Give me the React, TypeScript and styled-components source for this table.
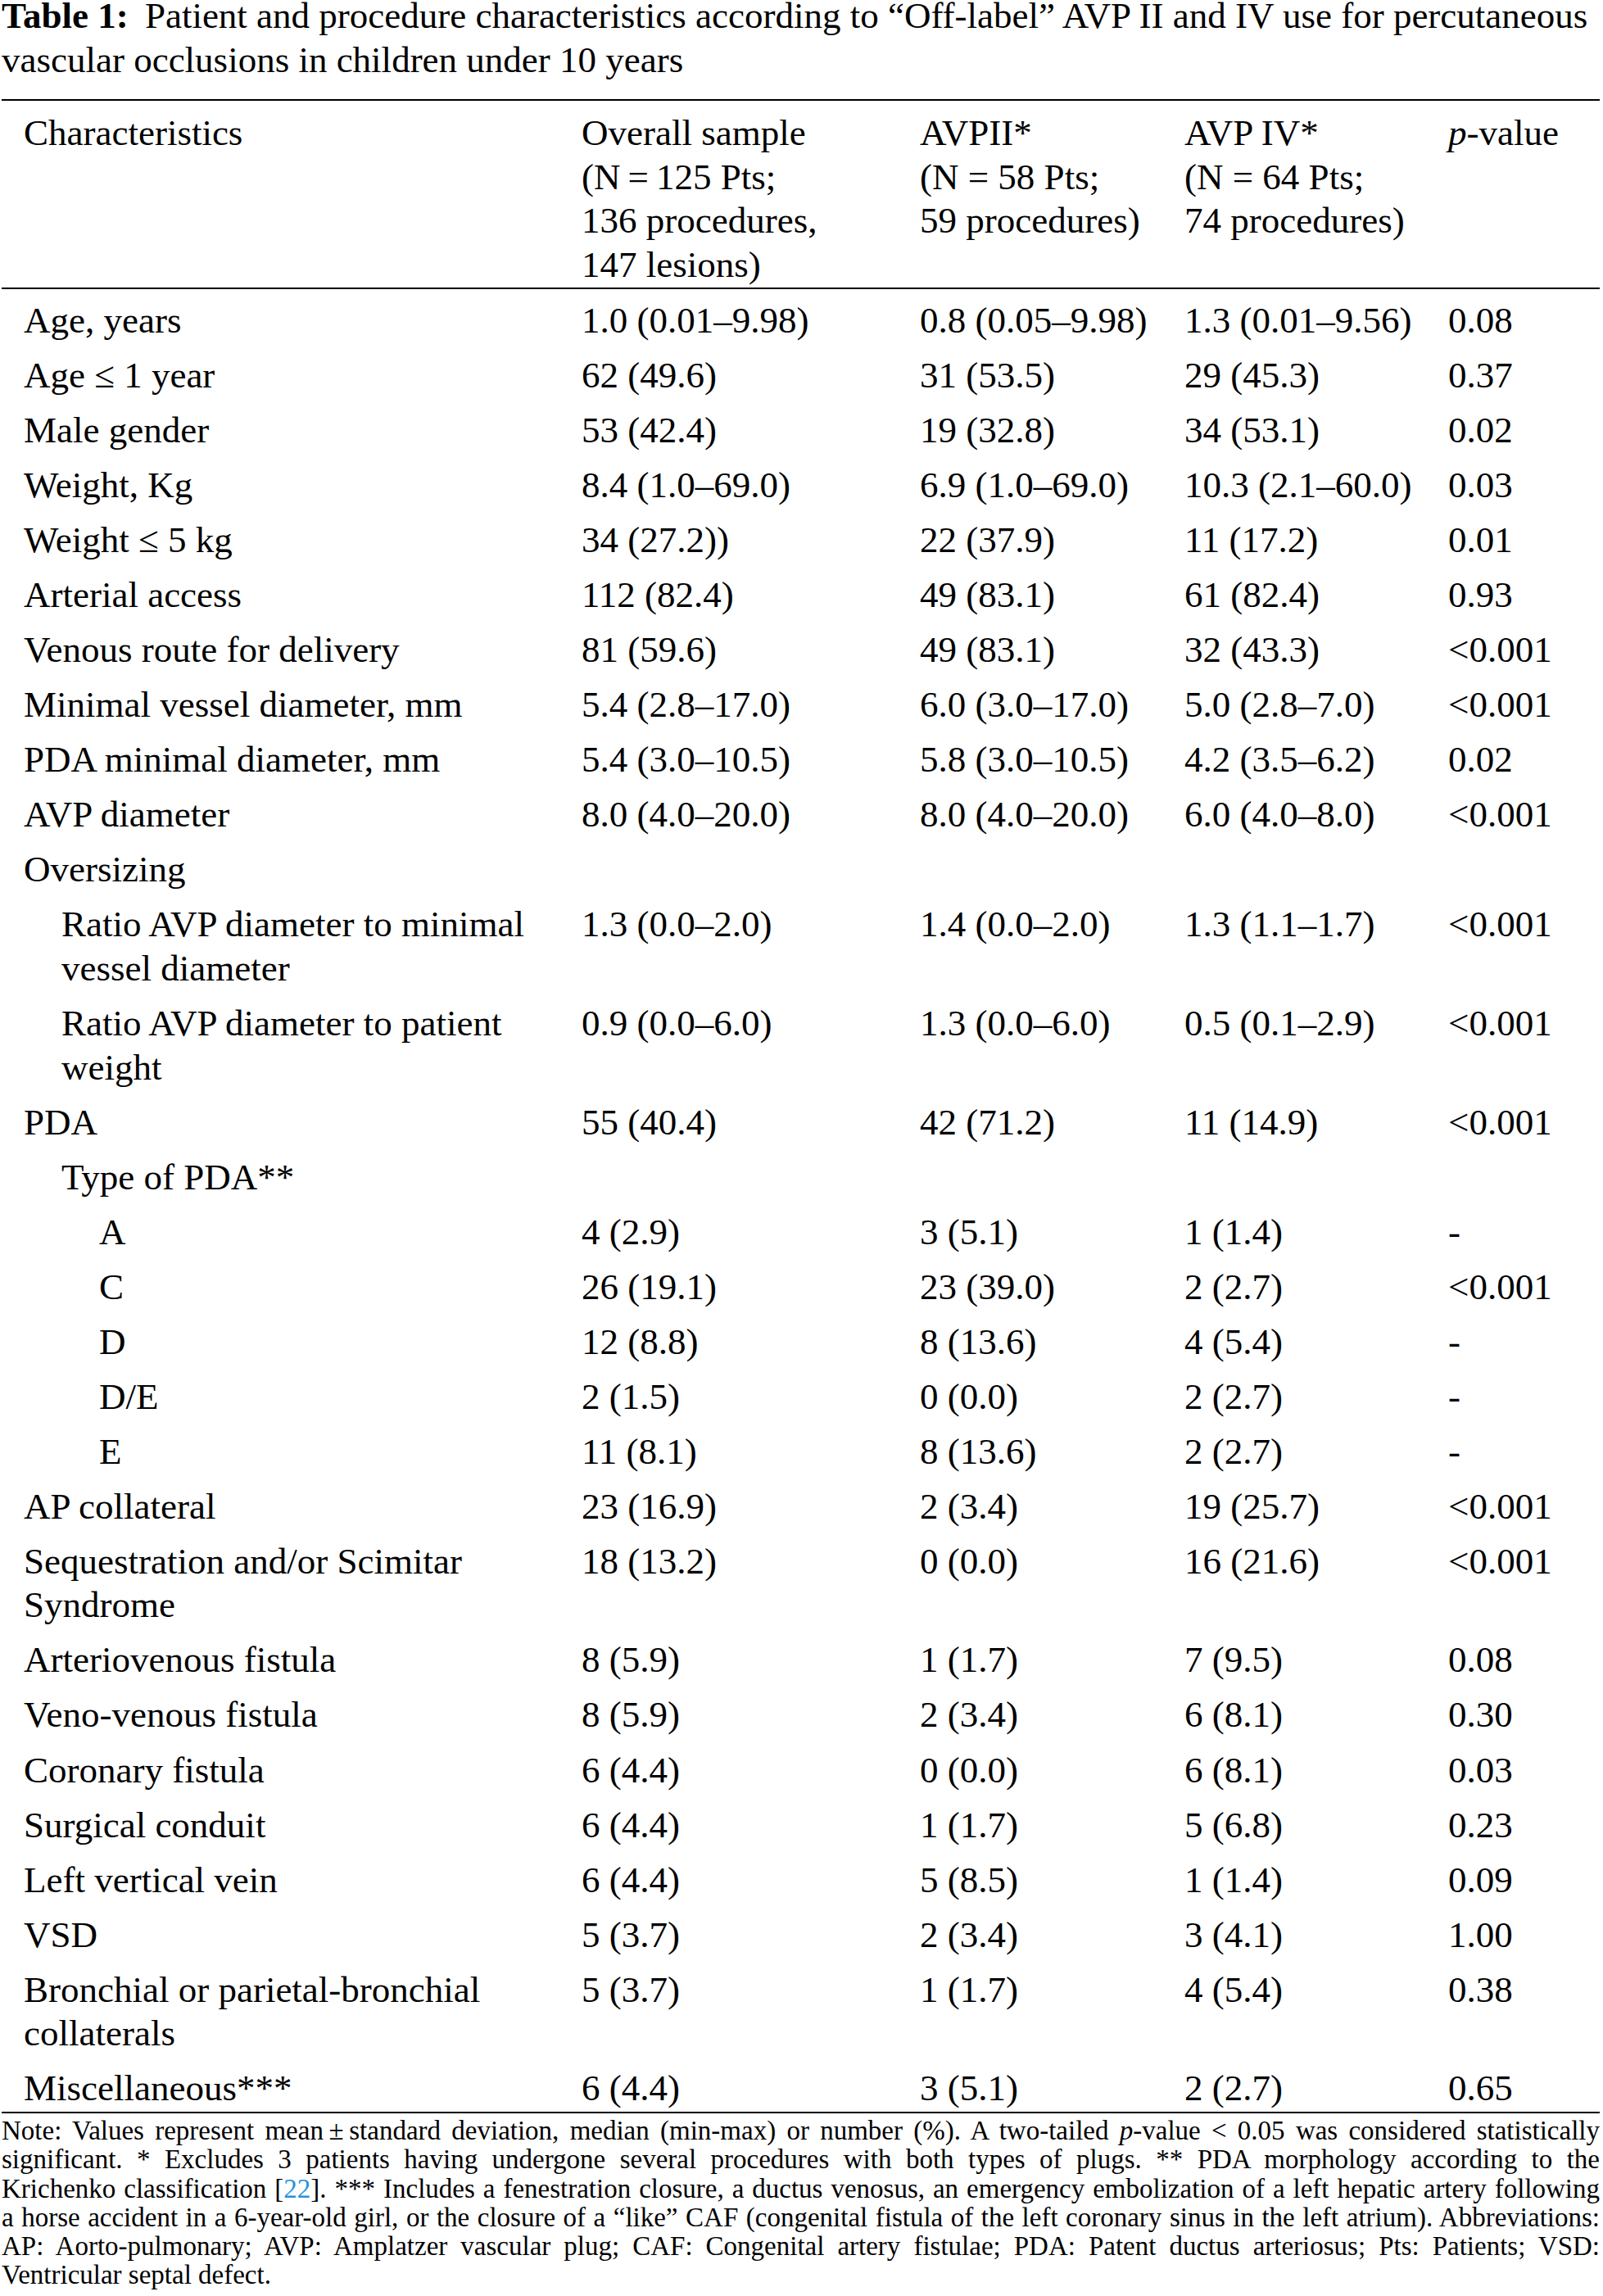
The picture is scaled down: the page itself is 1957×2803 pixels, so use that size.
import React from "react";
import styled, { createGlobalStyle } from "styled-components";

const GlobalStyle = createGlobalStyle`
  html, body {
    margin: 0;
    padding: 0;
    background: #ffffff;
  }
  body {
    font-family: "Liberation Serif", "Times New Roman", Times, serif;
    color: #000000;
  }
`;

const Page = styled.div`
  width: 1951px;
  margin: 0 0 0 2px;
  font-family: "Liberation Serif", "Times New Roman", Times, serif;
  color: #000000;
`;

const Caption = styled.div`
  font-size: 45px;
  line-height: 54px;
  margin-top: -8px;
`;

const CaptionLabel = styled.b`
  font-weight: 700;
  margin-right: 9px;
`;

const DataTable = styled.table`
  width: 100%;
  table-layout: fixed;
  border-collapse: separate;
  border-spacing: 0;
  margin-top: 21px;
  border-top: 2px solid #000;
  border-bottom: 2px solid #000;
  font-size: 45px;
  line-height: 53.6px;
`;

const Col = styled.col<{ $w: number }>`
  width: ${(p) => p.$w}px;
`;

const HeadCell = styled.th`
  text-align: left;
  font-weight: 400;
  vertical-align: top;
  padding: 13px 0 0.6px 27px;
  border-bottom: 2px solid #000;
  white-space: nowrap;
`;

const BodyRow = styled.tr`
  &:first-child td {
    padding-top: 12px;
  }
  &:last-child td {
    padding-bottom: 1.3px;
  }
`;

const LabelCell = styled.td<{ $level: number }>`
  vertical-align: top;
  text-align: left;
  padding: 6.73px 0 6.73px ${(p) => 27 + p.$level * 46}px;
`;

const ValueCell = styled.td`
  vertical-align: top;
  text-align: left;
  white-space: nowrap;
  padding: 6.73px 0 6.73px 27px;
`;

const Notes = styled.div`
  margin-top: 4px;
  font-size: 33px;
  line-height: 35.2px;
`;

const NoteLine = styled.div<{ $last?: boolean }>`
  text-align: justify;
  text-align-last: ${(p) => (p.$last ? "left" : "justify")};
`;

const Ref = styled.span`
  color: #2a93d5;
`;

const Em = styled.i`
  font-style: italic;
`;

type Row = { label: string; level: number; v: [string, string, string, string] };

const rows: Row[] = [
  { label: "Age, years", level: 0, v: ["1.0 (0.01–9.98)", "0.8 (0.05–9.98)", "1.3 (0.01–9.56)", "0.08"] },
  { label: "Age ≤ 1 year", level: 0, v: ["62 (49.6)", "31 (53.5)", "29 (45.3)", "0.37"] },
  { label: "Male gender", level: 0, v: ["53 (42.4)", "19 (32.8)", "34 (53.1)", "0.02"] },
  { label: "Weight, Kg", level: 0, v: ["8.4 (1.0–69.0)", "6.9 (1.0–69.0)", "10.3 (2.1–60.0)", "0.03"] },
  { label: "Weight ≤ 5 kg", level: 0, v: ["34 (27.2))", "22 (37.9)", "11 (17.2)", "0.01"] },
  { label: "Arterial access", level: 0, v: ["112 (82.4)", "49 (83.1)", "61 (82.4)", "0.93"] },
  { label: "Venous route for delivery", level: 0, v: ["81 (59.6)", "49 (83.1)", "32 (43.3)", "<0.001"] },
  { label: "Minimal vessel diameter, mm", level: 0, v: ["5.4 (2.8–17.0)", "6.0 (3.0–17.0)", "5.0 (2.8–7.0)", "<0.001"] },
  { label: "PDA minimal diameter, mm", level: 0, v: ["5.4 (3.0–10.5)", "5.8 (3.0–10.5)", "4.2 (3.5–6.2)", "0.02"] },
  { label: "AVP diameter", level: 0, v: ["8.0 (4.0–20.0)", "8.0 (4.0–20.0)", "6.0 (4.0–8.0)", "<0.001"] },
  { label: "Oversizing", level: 0, v: ["", "", "", ""] },
  { label: "Ratio AVP diameter to minimal vessel diameter", level: 1, v: ["1.3 (0.0–2.0)", "1.4 (0.0–2.0)", "1.3 (1.1–1.7)", "<0.001"] },
  { label: "Ratio AVP diameter to patient weight", level: 1, v: ["0.9 (0.0–6.0)", "1.3 (0.0–6.0)", "0.5 (0.1–2.9)", "<0.001"] },
  { label: "PDA", level: 0, v: ["55 (40.4)", "42 (71.2)", "11 (14.9)", "<0.001"] },
  { label: "Type of PDA**", level: 1, v: ["", "", "", ""] },
  { label: "A", level: 2, v: ["4 (2.9)", "3 (5.1)", "1 (1.4)", "-"] },
  { label: "C", level: 2, v: ["26 (19.1)", "23 (39.0)", "2 (2.7)", "<0.001"] },
  { label: "D", level: 2, v: ["12 (8.8)", "8 (13.6)", "4 (5.4)", "-"] },
  { label: "D/E", level: 2, v: ["2 (1.5)", "0 (0.0)", "2 (2.7)", "-"] },
  { label: "E", level: 2, v: ["11 (8.1)", "8 (13.6)", "2 (2.7)", "-"] },
  { label: "AP collateral", level: 0, v: ["23 (16.9)", "2 (3.4)", "19 (25.7)", "<0.001"] },
  { label: "Sequestration and/or Scimitar Syndrome", level: 0, v: ["18 (13.2)", "0 (0.0)", "16 (21.6)", "<0.001"] },
  { label: "Arteriovenous fistula", level: 0, v: ["8 (5.9)", "1 (1.7)", "7 (9.5)", "0.08"] },
  { label: "Veno-venous fistula", level: 0, v: ["8 (5.9)", "2 (3.4)", "6 (8.1)", "0.30"] },
  { label: "Coronary fistula", level: 0, v: ["6 (4.4)", "0 (0.0)", "6 (8.1)", "0.03"] },
  { label: "Surgical conduit", level: 0, v: ["6 (4.4)", "1 (1.7)", "5 (6.8)", "0.23"] },
  { label: "Left vertical vein", level: 0, v: ["6 (4.4)", "5 (8.5)", "1 (1.4)", "0.09"] },
  { label: "VSD", level: 0, v: ["5 (3.7)", "2 (3.4)", "3 (4.1)", "1.00"] },
  { label: "Bronchial or parietal-bronchial collaterals", level: 0, v: ["5 (3.7)", "1 (1.7)", "4 (5.4)", "0.38"] },
  { label: "Miscellaneous***", level: 0, v: ["6 (4.4)", "3 (5.1)", "2 (2.7)", "0.65"] },
];

const colWidths = [681, 413, 323, 322, 212];

export default function App() {
  return (
    <>
      <GlobalStyle />
      <Page>
        <Caption>
          <CaptionLabel>Table 1:</CaptionLabel> Patient and procedure characteristics according to “Off-label” AVP II
          and IV use for percutaneous vascular occlusions in children under 10 years
        </Caption>
        <DataTable>
          <colgroup>
            {colWidths.map((w, i) => (
              <Col key={i} $w={w} />
            ))}
          </colgroup>
          <thead>
            <tr>
              <HeadCell>Characteristics</HeadCell>
              <HeadCell>
                Overall sample
                <br />
                (N{"\u2009"}={"\u2009"}125 Pts;
                <br />
                136 procedures,
                <br />
                147 lesions)
              </HeadCell>
              <HeadCell>
                AVPII*
                <br />
                (N = 58 Pts;
                <br />
                59 procedures)
              </HeadCell>
              <HeadCell>
                AVP IV*
                <br />
                (N = 64 Pts;
                <br />
                74 procedures)
              </HeadCell>
              <HeadCell>
                <Em>p</Em>-value
              </HeadCell>
            </tr>
          </thead>
          <tbody>
            {rows.map((r, i) => (
              <BodyRow key={i}>
                <LabelCell $level={r.level}>{r.label}</LabelCell>
                {r.v.map((val, j) => (
                  <ValueCell key={j}>{val}</ValueCell>
                ))}
              </BodyRow>
            ))}
          </tbody>
        </DataTable>
        <Notes>
          <NoteLine>
            Note: Values represent mean{"\u2009"}±{"\u2009"}standard deviation, median (min-max) or number (%). A
            two-tailed <Em>p</Em>-value &lt; 0.05 was considered statistically
          </NoteLine>
          <NoteLine>
            significant. * Excludes 3 patients having undergone several procedures with both types of plugs. ** PDA
            morphology according to the
          </NoteLine>
          <NoteLine>
            Krichenko classification [<Ref>22</Ref>]. *** Includes a fenestration closure, a ductus venosus, an emergency
            embolization of a left hepatic artery following
          </NoteLine>
          <NoteLine>
            a horse accident in a 6-year-old girl, or the closure of a “like” CAF (congenital fistula of the left coronary
            sinus in the left atrium). Abbreviations:
          </NoteLine>
          <NoteLine>
            AP: Aorto-pulmonary; AVP: Amplatzer vascular plug; CAF: Congenital artery fistulae; PDA: Patent ductus
            arteriosus; Pts: Patients; VSD:
          </NoteLine>
          <NoteLine $last>Ventricular septal defect.</NoteLine>
        </Notes>
      </Page>
    </>
  );
}
